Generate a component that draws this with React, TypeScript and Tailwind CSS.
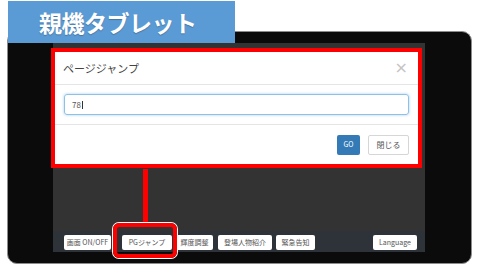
import { FC } from "react";

const jp = "font-['Noto_Sans_CJK_JP','Noto_Sans',sans-serif]";

type ToolButtonProps = {
    label: string
    className?: string
}
const ToolButton: FC<ToolButtonProps> = ({ label, className }) => (
    <div className={"h-[15px] bg-white rounded-[2px] flex items-center justify-center text-[7px] text-[#555] leading-none " + (className ?? "")}>
        {label}
    </div>
)

const PageJumpModal: FC = () => (
    <div className="w-[363px] h-[112px] bg-white outline-4 outline-[#ff0000] flex flex-col shadow-[1px_1px_2px_rgba(0,0,0,0.5)]">
        <div className="h-[33px] flex items-center justify-between pl-[8px] pr-[10px] border-b border-[#e5e5e5]">
            <span className="text-[11px] text-[#444]">ページジャンプ</span>
            <span className="text-[16px] text-[#c4c4c4] leading-none font-['DejaVu_Sans',sans-serif]">×</span>
        </div>
        <div className="h-[40px] px-[9px] flex items-center border-b border-[#e5e5e5]">
            <div className="w-full h-[21px] border border-[#8fc0e6] rounded-[3px] shadow-[0_0_3px_rgba(102,175,233,0.6)] flex items-center pl-[7px] text-[8px] text-[#555]">
                78<span className="w-px h-[8px] bg-[#333] ml-px"></span>
            </div>
        </div>
        <div className="flex-1 flex items-center justify-end gap-[8px] pr-[9px]">
            <div className="w-[23px] h-[20px] bg-[#337ab7] rounded-[2px] text-white text-[7px] flex items-center justify-center">GO</div>
            <div className="w-[41px] h-[20px] bg-white border border-[#d6d6d6] rounded-[2px] text-[#555] text-[8px] flex items-center justify-center">閉じる</div>
        </div>
    </div>
)

export default function App() {
    return (
        <div className={"relative w-[480px] h-[277px] bg-white overflow-hidden " + jp}>
            <div className="pt-[31px] pl-[7px]">
                <div className="w-[465px] h-[233px] bg-[#0b0b0b] border border-[#8c8c8c] rounded-[10px] pl-[45px] pt-[11px]">
                    <div className="w-[372px] h-[209px] bg-[#333333] flex flex-col">
                        <div className="flex-1 pt-[9px] pl-[2px]">
                            <PageJumpModal />
                        </div>
                        <div className="h-[21px] bg-[#2e3339] flex items-start pt-[4px] pl-[11px] pr-[8px]">
                            <ToolButton label="画面 ON/OFF" className="w-[47px]" />
                            <ToolButton label="PGジャンプ" className="w-[50px] ml-[11px]" />
                            <ToolButton label="輝度調整" className="w-[37px] ml-[4px]" />
                            <ToolButton label="登場人物紹介" className="w-[54px] ml-[5px]" />
                            <ToolButton label="緊急告知" className="w-[39px] ml-[4px]" />
                            <ToolButton label="Language" className="w-[44px] ml-auto" />
                        </div>
                    </div>
                </div>
            </div>

            {/* annotation overlay */}
            <div className="absolute left-[8px] top-[1px] w-[227px] h-[42px] bg-[#5b9bd5] flex items-center pl-[31px]">
                <span className="text-white text-[23px] font-bold tracking-[-0.5px] [text-shadow:0_1px_1px_rgba(0,0,0,0.25)]">親機タブレット</span>
            </div>
            <div className="absolute left-[143px] top-[169px] w-[5px] h-[54px] bg-[#ff0000]"></div>
            <div className="absolute left-[113px] top-[223px] w-[64px] h-[35px] border-4 border-[#ff0000] rounded-[6px] shadow-[0_0_0_1px_#ffffff]"></div>
        </div>
    )
}
